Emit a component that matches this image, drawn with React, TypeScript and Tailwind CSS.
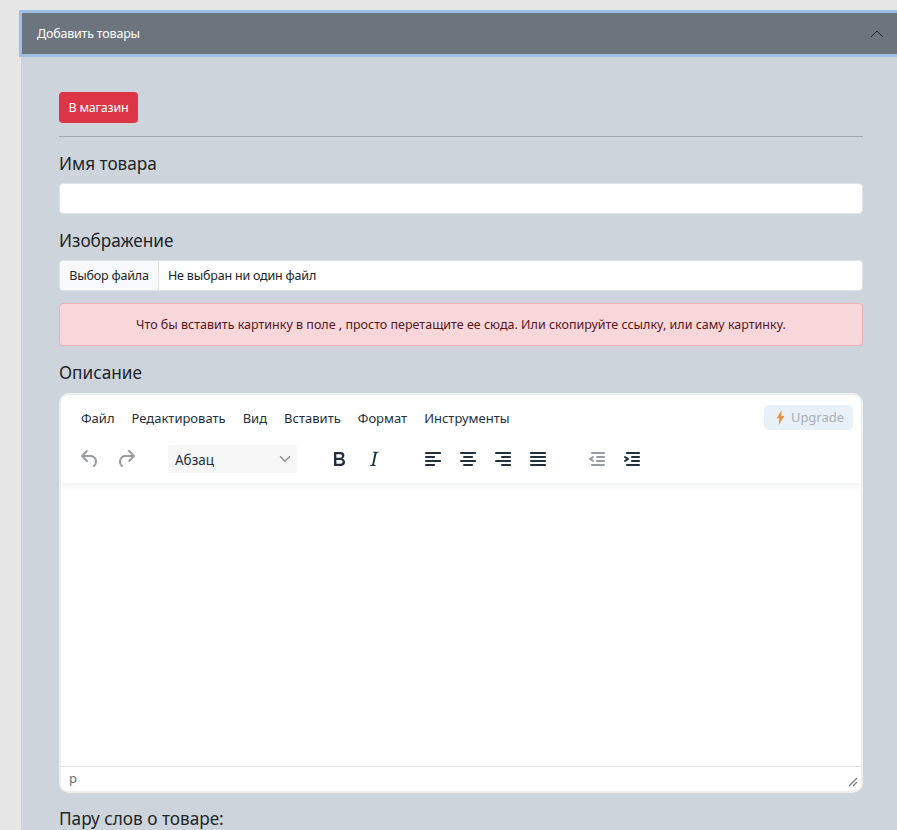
import { ChevronDown } from "lucide-react";

const icons = {
  undo: "M6.4 8H12c3.7 0 6.2 2 6.8 5.1.6 2.7-.4 5.6-2.3 6.8a1 1 0 0 1-1-1.8c1.1-.6 1.8-2.7 1.4-4.6-.5-2.1-2.1-3.5-4.9-3.5H6.4l3.3 3.3a1 1 0 1 1-1.4 1.4l-5-5a1 1 0 0 1 0-1.4l5-5a1 1 0 0 1 1.4 1.4L6.4 8Z",
  redo: "M17.6 10H12c-2.8 0-4.4 1.4-4.9 3.5-.4 2 .3 4 1.4 4.6a1 1 0 1 1-1 1.8c-2-1.2-2.9-4.1-2.3-6.8.6-3 3-5.1 6.8-5.1h5.6l-3.3-3.3a1 1 0 1 1 1.4-1.4l5 5a1 1 0 0 1 0 1.4l-5 5a1 1 0 0 1-1.4-1.4l3.3-3.3Z",
  bold: "M7.8 19c-.3 0-.5 0-.6-.2l-.2-.5V5.7c0-.2 0-.4.2-.5l.6-.2h5c1.5 0 2.7.3 3.5 1 .7.6 1.1 1.4 1.1 2.5a3 3 0 0 1-.6 1.9c-.4.6-1 1-1.6 1.2.4.1.9.3 1.3.6s.8.7 1 1.2c.4.4.5 1 .5 1.6 0 1.3-.4 2.3-1.3 3-.8.7-2.1 1-3.8 1H7.8Zm5-8.3c.6 0 1.2-.1 1.6-.5.4-.3.6-.7.6-1.3 0-1.1-.8-1.7-2.3-1.7H9.3v3.5h3.4Zm.5 6c.7 0 1.3-.1 1.7-.4.4-.4.6-.9.6-1.5s-.2-1-.7-1.4c-.4-.3-1-.4-2-.4H9.4v3.8h4Z",
  italic: "m16.7 4.7-.1.9h-.3c-.6 0-1 0-1.4.3-.3.3-.4.6-.5 1.1l-2.1 9.8v.6c0 .5.4.8 1.4.8h.2l-.2.8H8l.2-.8h.2c1.1 0 1.8-.5 2-1.5l2-9.8.1-.5c0-.6-.4-.8-1.4-.8h-.3l.2-.9h5.8Z",
  left: "M5 5h14c.6 0 1 .4 1 1s-.4 1-1 1H5a1 1 0 1 1 0-2Zm0 4h8c.6 0 1 .4 1 1s-.4 1-1 1H5a1 1 0 1 1 0-2Zm0 8h8c.6 0 1 .4 1 1s-.4 1-1 1H5a1 1 0 0 1 0-2Zm0-4h14c.6 0 1 .4 1 1s-.4 1-1 1H5a1 1 0 0 1 0-2Z",
  center: "M5 5h14c.6 0 1 .4 1 1s-.4 1-1 1H5a1 1 0 1 1 0-2Zm3 4h8c.6 0 1 .4 1 1s-.4 1-1 1H8a1 1 0 1 1 0-2Zm0 8h8c.6 0 1 .4 1 1s-.4 1-1 1H8a1 1 0 0 1 0-2Zm-3-4h14c.6 0 1 .4 1 1s-.4 1-1 1H5a1 1 0 0 1 0-2Z",
  right: "M5 5h14c.6 0 1 .4 1 1s-.4 1-1 1H5a1 1 0 1 1 0-2Zm6 4h8c.6 0 1 .4 1 1s-.4 1-1 1h-8a1 1 0 0 1 0-2Zm0 8h8c.6 0 1 .4 1 1s-.4 1-1 1h-8a1 1 0 0 1 0-2Zm-6-4h14c.6 0 1 .4 1 1s-.4 1-1 1H5a1 1 0 0 1 0-2Z",
  justify: "M5 5h14c.6 0 1 .4 1 1s-.4 1-1 1H5a1 1 0 1 1 0-2Zm0 4h14c.6 0 1 .4 1 1s-.4 1-1 1H5a1 1 0 1 1 0-2Zm0 4h14c.6 0 1 .4 1 1s-.4 1-1 1H5a1 1 0 0 1 0-2Zm0 4h14c.6 0 1 .4 1 1s-.4 1-1 1H5a1 1 0 0 1 0-2Z",
  outdent: "M7 5h12c.6 0 1 .4 1 1s-.4 1-1 1H7a1 1 0 1 1 0-2Zm5 4h7c.6 0 1 .4 1 1s-.4 1-1 1h-7a1 1 0 0 1 0-2Zm0 4h7c.6 0 1 .4 1 1s-.4 1-1 1h-7a1 1 0 0 1 0-2Zm-5 4h12a1 1 0 0 1 0 2H7a1 1 0 0 1 0-2Zm1.6-3.8a1 1 0 0 1-1.2 1.6l-3-2a1 1 0 0 1 0-1.6l3-2a1 1 0 0 1 1.2 1.6L6.8 12l1.8 1.2Z",
  indent: "M7 5h12c.6 0 1 .4 1 1s-.4 1-1 1H7a1 1 0 1 1 0-2Zm5 4h7c.6 0 1 .4 1 1s-.4 1-1 1h-7a1 1 0 0 1 0-2Zm0 4h7c.6 0 1 .4 1 1s-.4 1-1 1h-7a1 1 0 0 1 0-2Zm-5 4h12a1 1 0 0 1 0 2H7a1 1 0 0 1 0-2Zm-2.6-3.8L6.2 12l-1.8-1.2a1 1 0 0 1 1.2-1.6l3 2a1 1 0 0 1 0 1.6l-3 2a1 1 0 1 1-1.2-1.6Z",
};

function ToolIcon({ name, muted }: { name: keyof typeof icons; muted?: boolean }) {
  return (
    <svg viewBox="0 0 24 24" className={`h-6 w-6 shrink-0 ${muted ? "fill-[#9a9ca3]" : "fill-[#222f3e]"}`}>
      <path d={icons[name]} />
    </svg>
  );
}

const menus = ["Файл", "Редактировать", "Вид", "Вставить", "Формат", "Инструменты"];

function Label({ children }: { children: string }) {
  return <div className="text-[17.2px] leading-[24px] text-[#212529]">{children}</div>;
}

function Editor() {
  return (
    <div className="flex h-[400px] flex-col overflow-hidden rounded-[10px] border-2 border-[#eeeeee] bg-white">
      <div className="relative z-10 shadow-[0_3px_6px_rgba(34,47,62,0.07)]">
        <div className="flex h-[46px] items-center justify-between pl-[20px] pr-[8px]">
          <div className="flex gap-[17px] pt-[2px] text-[13px] text-[#222f3e]">
            {menus.map((m) => (
              <span key={m}>{m}</span>
            ))}
          </div>
          <div className="-mt-[2px] flex h-[25px] w-[89px] items-center justify-center gap-[6px] rounded-[5px] bg-[#e8f1f8] pl-[3px] pt-[2px] text-[13px] text-[#a9afb8]">
            <svg viewBox="0 0 12 20" className="-mt-[2px] h-[15px] w-[9px] fill-[#f08c3a]">
              <path d="M7.5 0 1 11h3.5L3.5 20 11 8H7l.5-8Z" />
            </svg>
            <span>Upgrade</span>
          </div>
        </div>
        <div className="flex h-[42px] items-start pl-[17px] pt-[5px]">
          <div className="flex gap-[12px] pt-[1px]">
            <ToolIcon name="undo" muted />
            <ToolIcon name="redo" muted />
          </div>
          <div className="-mt-[1px] ml-[30px] flex h-[28px] w-[129px] items-center justify-between rounded-[3px] bg-[#f7f7f7] pl-[7px] pr-[3px] pt-[2px] text-[13.5px] text-[#222f3e]">
            <span>Абзац</span>
            <ChevronDown className="-mt-[2px] h-[18px] w-[18px] text-[#8a9097]" strokeWidth={2} />
          </div>
          <div className="ml-[30px] flex gap-[11px] pt-[1px]">
            <ToolIcon name="bold" />
            <ToolIcon name="italic" />
          </div>
          <div className="ml-[35px] flex gap-[11px] pt-[1px]">
            <ToolIcon name="left" />
            <ToolIcon name="center" />
            <ToolIcon name="right" />
            <ToolIcon name="justify" />
          </div>
          <div className="ml-[35px] flex gap-[11px] pt-[1px]">
            <ToolIcon name="outdent" muted />
            <ToolIcon name="indent" />
          </div>
        </div>
      </div>
      <div className="flex-1" />
      <div className="relative flex h-[25px] items-center border-t border-[#e3e3e3] pl-[8px] text-[13px] text-[#6b6f76]">
        <span>p</span>
        <svg viewBox="0 0 10 10" className="absolute bottom-[4px] right-[3px] h-[10px] w-[10px] stroke-[#7d8187]">
          <path d="M1 9 9 1M5 9l4-4" strokeWidth="1.3" fill="none" />
        </svg>
      </div>
    </div>
  );
}

export default function App() {
  return (
    <div className="h-[830px] overflow-hidden bg-[#e6e6e6] pt-[10px] font-['Noto_Sans','Open_Sans',sans-serif]">
      <div className="ml-[19px]">
        <div className="flex h-[47px] items-center justify-between border-y-[3px] border-l-[3px] border-[#9dbfe3] bg-[#6c757d] pl-[15px] pr-[13px] text-[12.5px] tracking-[-0.2px] text-white">
          <span className="pt-[1px]">Добавить товары</span>
          <svg viewBox="0 0 14 8" className="h-[8px] w-[14px] fill-none stroke-[#212529]">
            <path d="M1 7 7 1l6 6" strokeWidth="1" />
          </svg>
        </div>
        <div className="ml-[2px] bg-[#ced4dc] pb-[20px] pl-[38px] pr-[34px] pt-[35px]">
          <button className="block h-[31px] w-[79px] rounded-[4px] bg-[#dc3545] pt-[2px] text-[12.5px] tracking-[-0.2px] text-white">В магазин</button>
          <div className="mt-[13px] h-px bg-[#a3a6aa]" />
          <div className="mt-[15px]">
            <Label>Имя товара</Label>
          </div>
          <div className="mt-[7px] h-[31px] rounded-[4px] border border-[#dee2e6] bg-white" />
          <div className="mt-[15px]">
            <Label>Изображение</Label>
          </div>
          <div className="mt-[7px] flex h-[31px] overflow-hidden rounded-[4px] border border-[#dee2e6] bg-white text-[12.5px] tracking-[-0.2px] text-[#212529]">
            <div className="flex w-[99px] items-center justify-center border-r border-[#dee2e6] bg-[#f8f9fa] pt-[2px]">Выбор файла</div>
            <div className="flex items-center pl-[9px] pt-[2px]">Не выбран ни один файл</div>
          </div>
          <div className="mt-[12px] flex h-[43px] items-center justify-center rounded-[4px] border border-[#f1aeb5] bg-[#f8d7da] pt-[1px] text-[12.5px] text-[#58151c]">
            Что бы вставить картинку в поле , просто перетащите ее сюда. Или скопируйте ссылку, или саму картинку.
          </div>
          <div className="mt-[15px]">
            <Label>Описание</Label>
          </div>
          <div className="mt-[8px]">
            <Editor />
          </div>
          <div className="mt-[14px]">
            <Label>Пару слов о товаре:</Label>
          </div>
        </div>
      </div>
    </div>
  );
}
